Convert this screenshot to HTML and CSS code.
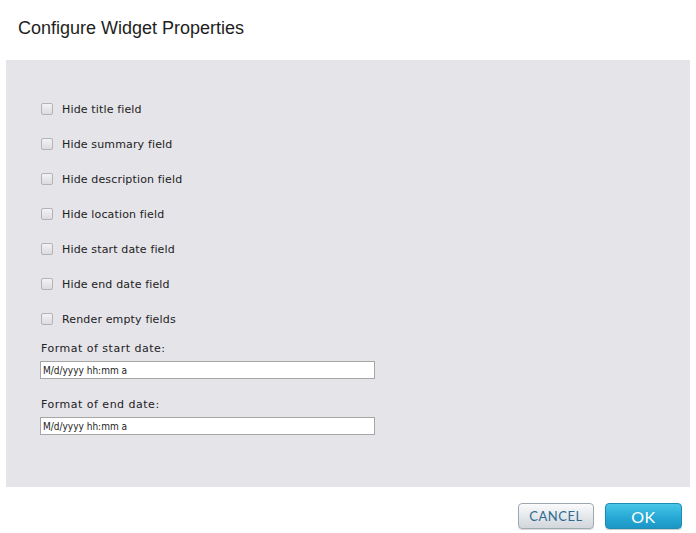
FILE: index.html
```html
<!DOCTYPE html>
<html lang="en">
<head>
<meta charset="utf-8">
<title>Configure Widget Properties</title>
<link rel="stylesheet" href="styles.css">
</head>
<body>
<div class="dialog">
  <h1 class="dialog-title">Configure Widget Properties</h1>
  <div class="dialog-body">
    <ul class="options">
      <li><label class="option"><input type="checkbox" class="check"><span>Hide title field</span></label></li>
      <li><label class="option"><input type="checkbox" class="check"><span>Hide summary field</span></label></li>
      <li><label class="option"><input type="checkbox" class="check"><span>Hide description field</span></label></li>
      <li><label class="option"><input type="checkbox" class="check"><span>Hide location field</span></label></li>
      <li><label class="option"><input type="checkbox" class="check"><span>Hide start date field</span></label></li>
      <li><label class="option"><input type="checkbox" class="check"><span>Hide end date field</span></label></li>
      <li><label class="option"><input type="checkbox" class="check"><span>Render empty fields</span></label></li>
    </ul>
    <div class="field">
      <label class="field-label" for="start-fmt">Format of start date:</label>
      <input id="start-fmt" class="text-input" type="text" value="M/d/yyyy hh:mm a">
    </div>
    <div class="field">
      <label class="field-label" for="end-fmt">Format of end date:</label>
      <input id="end-fmt" class="text-input" type="text" value="M/d/yyyy hh:mm a">
    </div>
  </div>
  <div class="dialog-footer">
    <button class="btn btn-cancel" type="button">CANCEL</button>
    <button class="btn btn-ok" type="button">OK</button>
  </div>
</div>
</body>
</html>
```
FILE: styles.css
```css
html, body {
  margin: 0;
  padding: 0;
  background: #ffffff;
}

.dialog {
  width: 696px;
  height: 533px;
  display: flex;
  flex-direction: column;
  font-family: "DejaVu Sans", Verdana, sans-serif;
  color: #222222;
}

.dialog-title {
  margin: 0;
  padding: 17px 0 0 18px;
  height: 60px;
  flex: none;
  box-sizing: border-box;
  font-family: "Liberation Sans", Arial, sans-serif;
  font-weight: normal;
  font-size: 18px;
  line-height: 22px;
  color: #1e1e1e;
}

.dialog-body {
  margin: 0 6px;
  height: 427px;
  flex: none;
  box-sizing: border-box;
  background: #e5e4e9;
  padding: 42px 0 0 34px;
}

.options {
  list-style: none;
  margin: 0;
  padding: 0;
  display: flex;
  flex-direction: column;
  gap: 21px;
}

.option {
  display: flex;
  align-items: center;
  height: 14px;
  font-size: 11px;
  letter-spacing: 0.15px;
}

.check {
  appearance: none;
  -webkit-appearance: none;
  margin: 0 9px 0 1px;
  width: 12px;
  height: 12px;
  border: 1px solid #b3b3b7;
  border-radius: 2px;
  background: linear-gradient(#f3f3f5, #dcdce0);
  box-sizing: border-box;
}

.field {
  display: flex;
  flex-direction: column;
}

.field-label {
  margin: 16px 0 5px 1px;
  font-size: 11px;
  line-height: 14px;
  letter-spacing: 0.5px;
}

.field + .field .field-label {
  margin-top: 19px;
}

.text-input {
  width: 335px;
  height: 18px;
  margin: 0;
  box-sizing: border-box;
  border: 1px solid #a6a6a6;
  background: #ffffff;
  padding: 0 0 0 2px;
  font-family: "DejaVu Sans Condensed", Tahoma, sans-serif;
  font-size: 10px;
  color: #222222;
}

.dialog-footer {
  display: flex;
  justify-content: flex-end;
  gap: 11px;
  padding: 16px 14px 0 0;
}

.btn {
  height: 26px;
  border-radius: 4px;
  font-family: "Lato", "Open Sans", sans-serif;
  letter-spacing: 0.5px;
  cursor: pointer;
}

.btn-cancel {
  width: 76px;
  border: 1px solid #9ea8b0;
  background: linear-gradient(#fbfbfc, #e3e6ea 55%, #d2d7dc);
  color: #2e6b8f;
  font-size: 13px;
  box-shadow: 0 1px 1px rgba(0, 0, 0, 0.15);
}

.btn-ok {
  width: 77px;
  border: 1px solid #1b8db3;
  background: linear-gradient(#4ac7e8, #26a9d6 55%, #1d96c4);
  color: #ffffff;
  font-size: 16px;
  box-shadow: 0 1px 1px rgba(0, 0, 0, 0.2);
}
```
